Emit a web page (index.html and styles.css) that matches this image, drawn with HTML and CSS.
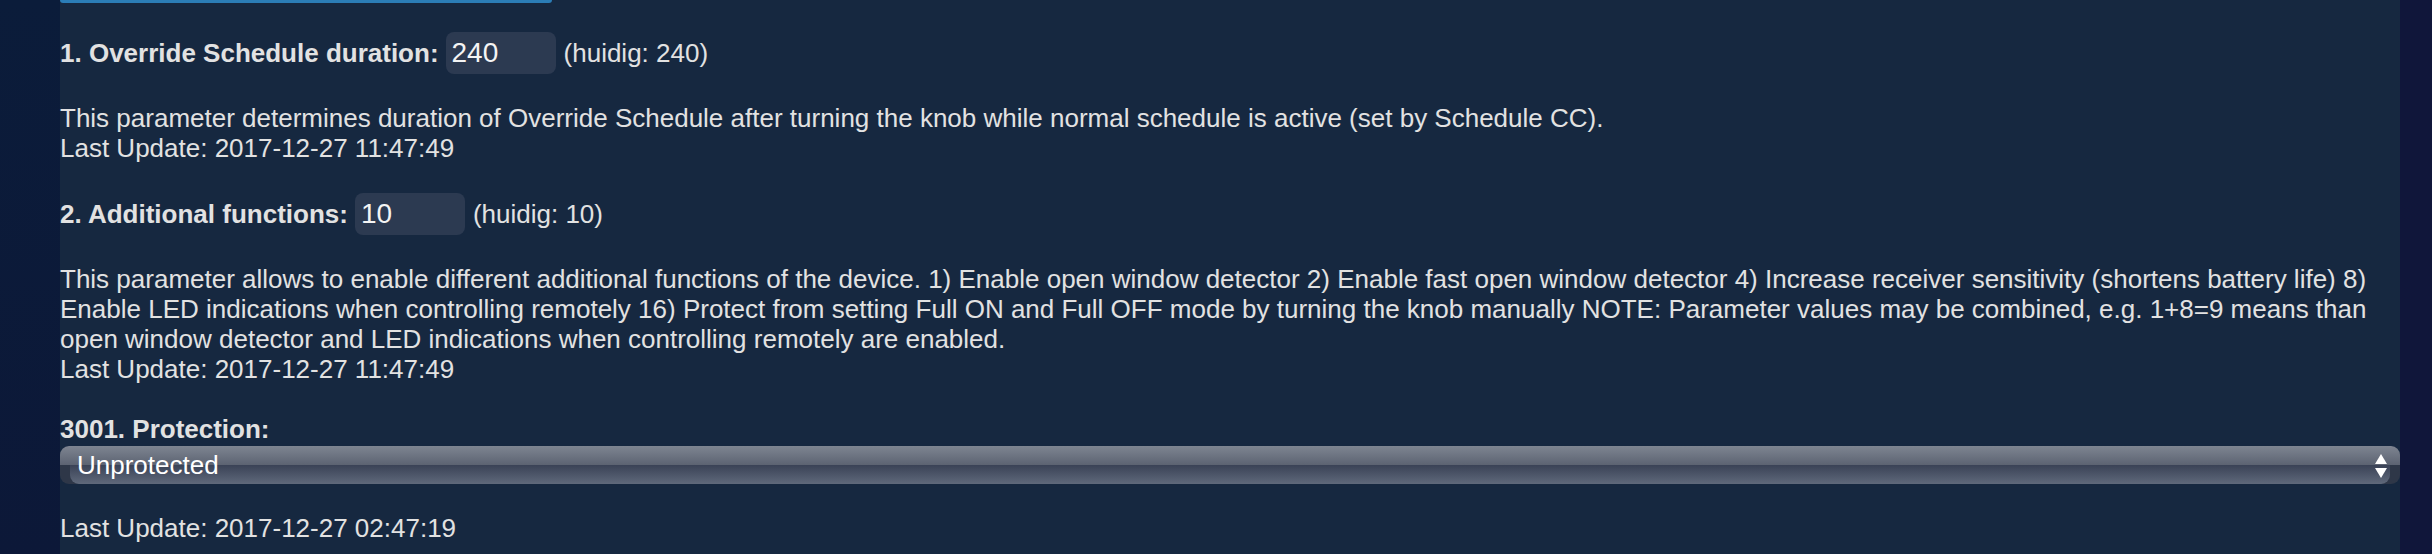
FILE: index.html
```html
<!DOCTYPE html>
<html>
<head>
<meta charset="utf-8">
<link rel="stylesheet" href="styles.css">
</head>
<body>
<div class="page">
  <aside class="side-left"></aside>
  <main class="content">
    <div class="topbtn"></div>

    <section class="param">
      <div class="row">
        <b class="label">1. Override Schedule duration:</b>
        <input class="num" type="text" value="240">
        <span class="cur">(huidig: 240)</span>
      </div>
      <p class="desc">This parameter determines duration of Override Schedule after turning the knob while normal schedule is active (set by Schedule CC).<br>Last Update: 2017-12-27 11:47:49</p>
    </section>

    <section class="param">
      <div class="row">
        <b class="label">2. Additional functions:</b>
        <input class="num" type="text" value="10">
        <span class="cur">(huidig: 10)</span>
      </div>
      <p class="desc">This parameter allows to enable different additional functions of the device. 1) Enable open window detector 2) Enable fast open window detector 4) Increase receiver sensitivity (shortens battery life) 8) Enable LED indications when controlling remotely 16) Protect from setting Full ON and Full OFF mode by turning the knob manually NOTE: Parameter values may be combined, e.g. 1+8=9 means than open window detector and LED indications when controlling remotely are enabled.<br>Last Update: 2017-12-27 11:47:49</p>
    </section>

    <section class="param">
      <b class="label block">3001. Protection:</b>
      <div class="select">
        <span class="select-text">Unprotected</span>
        <svg class="arrows" width="12" height="24" viewBox="0 0 12 24">
          <polygon points="6,0 12,10 0,10" fill="#fff"/>
          <polygon points="0,14 12,14 6,24" fill="#fff"/>
        </svg>
      </div>
      <p class="desc gap">Last Update: 2017-12-27 02:47:19</p>
    </section>
  </main>
  <aside class="side-right"></aside>
</div>
</body>
</html>
```

FILE: styles.css
```css
html, body {
  margin: 0;
  padding: 0;
  height: 554px;
  overflow: hidden;
  background: #162840;
}

.page {
  display: flex;
  height: 554px;
  font-family: "Liberation Sans", Arial, Helvetica, sans-serif;
  font-size: 26px;
  line-height: 30px;
  color: #e2e2e2;
}

.side-left {
  width: 60px;
  flex: none;
  background: linear-gradient(#0b1c3a, #0c1838);
}

.side-right {
  width: 32px;
  flex: none;
  background: #10163a;
}

.content {
  flex: 1;
  min-width: 0;
  background: #162840;
}

.topbtn {
  width: 492px;
  height: 3px;
  background: #2b7db6;
  border-radius: 0 0 8px 8px;
}

.param {
  margin-top: 30px;
}

.param:first-of-type {
  margin-top: 29px;
}

.row {
  display: flex;
  align-items: center;
  height: 42px;
}

.label {
  font-weight: bold;
}

.label.block {
  display: block;
}

.num {
  box-sizing: border-box;
  width: 110px;
  height: 42px;
  margin: 0 8px 0 7px;
  padding: 0 6px;
  border: none;
  border-radius: 8px;
  background: #2c3a51;
  color: #f4f4f4;
  font-family: inherit;
  font-size: 28px;
  outline: none;
}

.desc {
  margin: 29px 0 0;
}

.desc.gap {
  margin-top: 29px;
}

.select {
  position: relative;
  margin-top: 2px;
  height: 38px;
  border-radius: 9px;
  background: linear-gradient(#7e8591 0%, #5c6372 50%, #2e3748 50%, #2e3748 100%);
  display: flex;
  align-items: center;
  justify-content: space-between;
  padding: 0 13px 0 17px;
  color: #ffffff;
}

.select::before {
  content: "";
  position: absolute;
  left: 10px;
  right: 10px;
  top: 19px;
  bottom: 0;
  border-radius: 0 0 9px 9px;
  background: linear-gradient(#3a4256, #5f697b);
}

.select-text,
.arrows {
  position: relative;
}

.arrows {
  display: block;
  margin-top: 2px;
}
```
